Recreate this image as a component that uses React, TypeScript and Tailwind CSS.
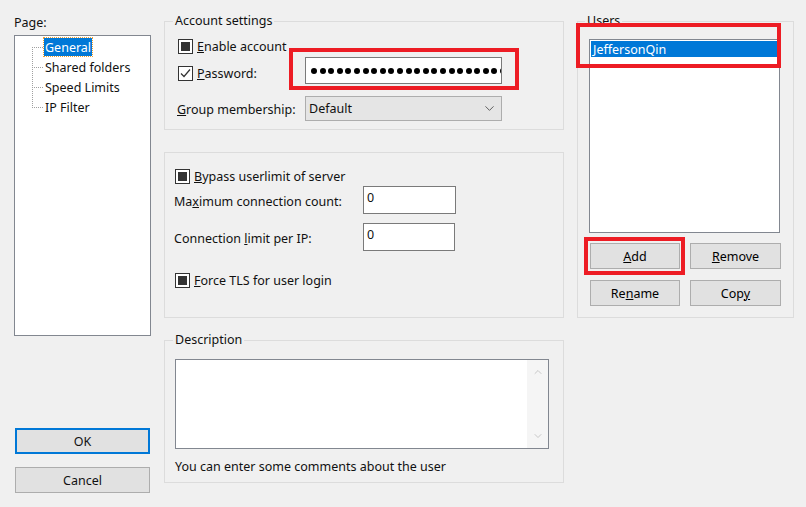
import React from 'react';
import { ChevronDown, ChevronUp } from 'lucide-react';

function BoxCheck({ checked }: { checked?: boolean }) {
  return (
    <span className="w-[15px] h-[15px] border border-[#333] bg-white flex items-center justify-center shrink-0">
      {checked ? (
        <svg width="13" height="13" viewBox="0 0 13 13">
          <path d="M2 6.5 L5 9.5 L11 2.5" fill="none" stroke="#333" strokeWidth="1.2" />
        </svg>
      ) : (
        <span className="w-[9px] h-[9px] bg-[#333]" />
      )}
    </span>
  );
}

function Btn({ children, w }: { children: React.ReactNode; w: string }) {
  return (
    <button className={`${w} h-[26px] bg-[#e1e1e1] border border-[#adadad] text-[12.5px] leading-none text-black pt-[2px]`}>
      {children}
    </button>
  );
}

export default function App() {
  const dots = Array.from({ length: 23 });

  return (
    <div className="w-[806px] h-[507px] bg-[#f0f0f0] flex items-start font-['Noto_Sans',sans-serif] text-[12.5px] leading-[16px] text-[#111] overflow-hidden">
      {/* left column */}
      <div className="ml-[14px] w-[137px] flex flex-col">
        <div className="mt-[13px] h-[16px] pt-[2px]">Page:</div>
        <div className="mt-[6px] h-[301px] border border-[#828790] bg-white relative pt-[1px]">
          <svg className="absolute left-0 top-0" width="40" height="80">
            <g stroke="#a0a0a0" strokeDasharray="1 1" fill="none">
              <path d="M17.5 11 V72" />
              <path d="M17 11.5 H29" />
              <path d="M17 31.5 H29" />
              <path d="M17 51.5 H29" />
              <path d="M17 71.5 H29" />
            </g>
          </svg>
          <div className="ml-[29px] flex flex-col items-start">
            <div className="h-[20px] flex items-center">
              <span className="px-[1px] bg-[#0078d7] text-white outline-1 outline-dotted outline-[#f0a030] h-[18px] leading-[18px] pt-[1px]">General</span>
            </div>
            <div className="h-[20px] flex items-center px-[1px] pt-[2px]">Shared folders</div>
            <div className="h-[20px] flex items-center px-[1px] pt-[2px]">Speed Limits</div>
            <div className="h-[20px] flex items-center px-[1px] pt-[2px]">IP Filter</div>
          </div>
        </div>
        <button className="mt-[92px] ml-[1px] w-[135px] h-[26px] bg-[#e1e1e1] border-2 border-[#0078d7] text-[12.5px] leading-none pt-[2px]">
          OK
        </button>
        <button className="mt-[13px] ml-[1px] w-[135px] h-[26px] bg-[#e1e1e1] border border-[#adadad] text-[12.5px] leading-none pt-[2px]">
          Cancel
        </button>
      </div>

      {/* middle column */}
      <div className="ml-[13px] w-[400px] flex flex-col">
        <fieldset className="mt-[13px] h-[117px] border border-[#dcdcdc]">
          <legend className="ml-[8px] px-[2px] leading-[16px]">Account settings</legend>
          <div className="mt-[9px] pl-[13px] h-[16px] flex items-center gap-[4px]">
            <BoxCheck />
            <span className="pt-[2px]"><u>E</u>nable account</span>
          </div>
          <div className="mt-[3px] pl-[13px] flex items-start">
            <div className="w-[127px] mt-[7px] flex items-center gap-[4px]">
              <BoxCheck checked />
              <span className="pt-[2px]"><u>P</u>assword:</span>
            </div>
            <div className="relative">
              <div className="w-[197px] h-[27px] border border-[#7a7a7a] bg-white flex items-center pl-[5px] overflow-hidden">
                {dots.map((_, i) => (
                  <span key={i} className="w-[6px] h-[6px] rounded-full bg-black shrink-0 mr-[2.6px]" />
                ))}
              </div>
              <div className="absolute left-[-16px] top-[-9px] w-[230px] h-[42px] border-4 border-[#ed1c24]" />
            </div>
          </div>
          <div className="mt-[12px] pl-[12px] flex items-center">
            <span className="w-[128px] pt-[2px]"><u>G</u>roup membership:</span>
            <div className="w-[197px] h-[25px] bg-[#e5e5e5] border border-[#adadad] flex items-center justify-between pl-[3px] pr-[4px]">
              <span className="pt-[1px]">Default</span>
              <ChevronDown size={15} strokeWidth={1.2} color="#333" />
            </div>
          </div>
        </fieldset>

        <fieldset className="mt-[22px] h-[166px] border border-[#dcdcdc]">
          <div className="mt-[15px] pl-[10px] h-[16px] flex items-center gap-[4px]">
            <BoxCheck />
            <span className="pt-[2px]"><u>B</u>ypass userlimit of server</span>
          </div>
          <div className="mt-[2px] pl-[9px] flex items-center">
            <span className="w-[189px] mt-[4px]">Ma<u>x</u>imum connection count:</span>
            <div className="w-[93px] h-[28px] border border-[#7a7a7a] bg-white pl-[3px] pt-[3px]">0</div>
          </div>
          <div className="mt-[9px] pl-[9px] flex items-center">
            <span className="w-[189px] mt-[4px]">Connection <u>l</u>imit per IP:</span>
            <div className="w-[92px] h-[28px] border border-[#7a7a7a] bg-white pl-[3px] pt-[3px]">0</div>
          </div>
          <div className="mt-[21px] pl-[10px] h-[16px] flex items-center gap-[4px]">
            <BoxCheck />
            <span className="pt-[2px]"><u>F</u>orce TLS for user login</span>
          </div>
        </fieldset>

        <fieldset className="mt-[14px] h-[151px] border border-[#dcdcdc]">
          <legend className="ml-[8px] px-[2px] leading-[16px]">Description</legend>
          <div className="mt-[11px] ml-[10px] w-[374px] h-[90px] border border-[#828790] bg-white flex justify-end">
            <div className="w-[21px] h-full bg-[#f5f5f5] flex flex-col items-center justify-between py-[6px]">
              <ChevronUp size={12} strokeWidth={2} color="#c8c8c8" />
              <ChevronDown size={12} strokeWidth={2} color="#c8c8c8" />
            </div>
          </div>
          <div className="mt-[9px] ml-[10px] h-[16px] pt-[1px]">You can enter some comments about the user</div>
        </fieldset>
      </div>

      {/* right column */}
      <div className="ml-[13px] w-[217px] flex flex-col">
        <fieldset className="mt-[13px] h-[305px] border border-[#dcdcdc]">
          <legend className="ml-[7px] px-[2px] leading-[16px]"><u>U</u>sers</legend>
          <div className="relative mt-[10px] ml-[11px] w-[191px]">
            <div className="h-[194px] border border-[#828790] bg-white p-[1px]">
              <div className="h-[16px] bg-[#0078d7] text-white pl-[2px] leading-[16px] pt-[1px]">JeffersonQin</div>
            </div>
            <div className="absolute left-[-13px] top-[-16px] w-[205px] h-[45px] border-4 border-[#ed1c24]" />
          </div>
          <div className="mt-[10px] ml-[12px] flex gap-[10px]">
            <div className="relative">
              <Btn w="w-[90px]"><u>A</u>dd</Btn>
              <div className="absolute left-[-6px] top-[-6px] w-[101px] h-[38px] border-4 border-[#ed1c24]" />
            </div>
            <Btn w="w-[91px]"><u>R</u>emove</Btn>
          </div>
          <div className="mt-[11px] ml-[12px] flex gap-[10px]">
            <Btn w="w-[90px]">Re<u>n</u>ame</Btn>
            <Btn w="w-[91px]">Cop<u>y</u></Btn>
          </div>
        </fieldset>
      </div>
    </div>
  );
}
